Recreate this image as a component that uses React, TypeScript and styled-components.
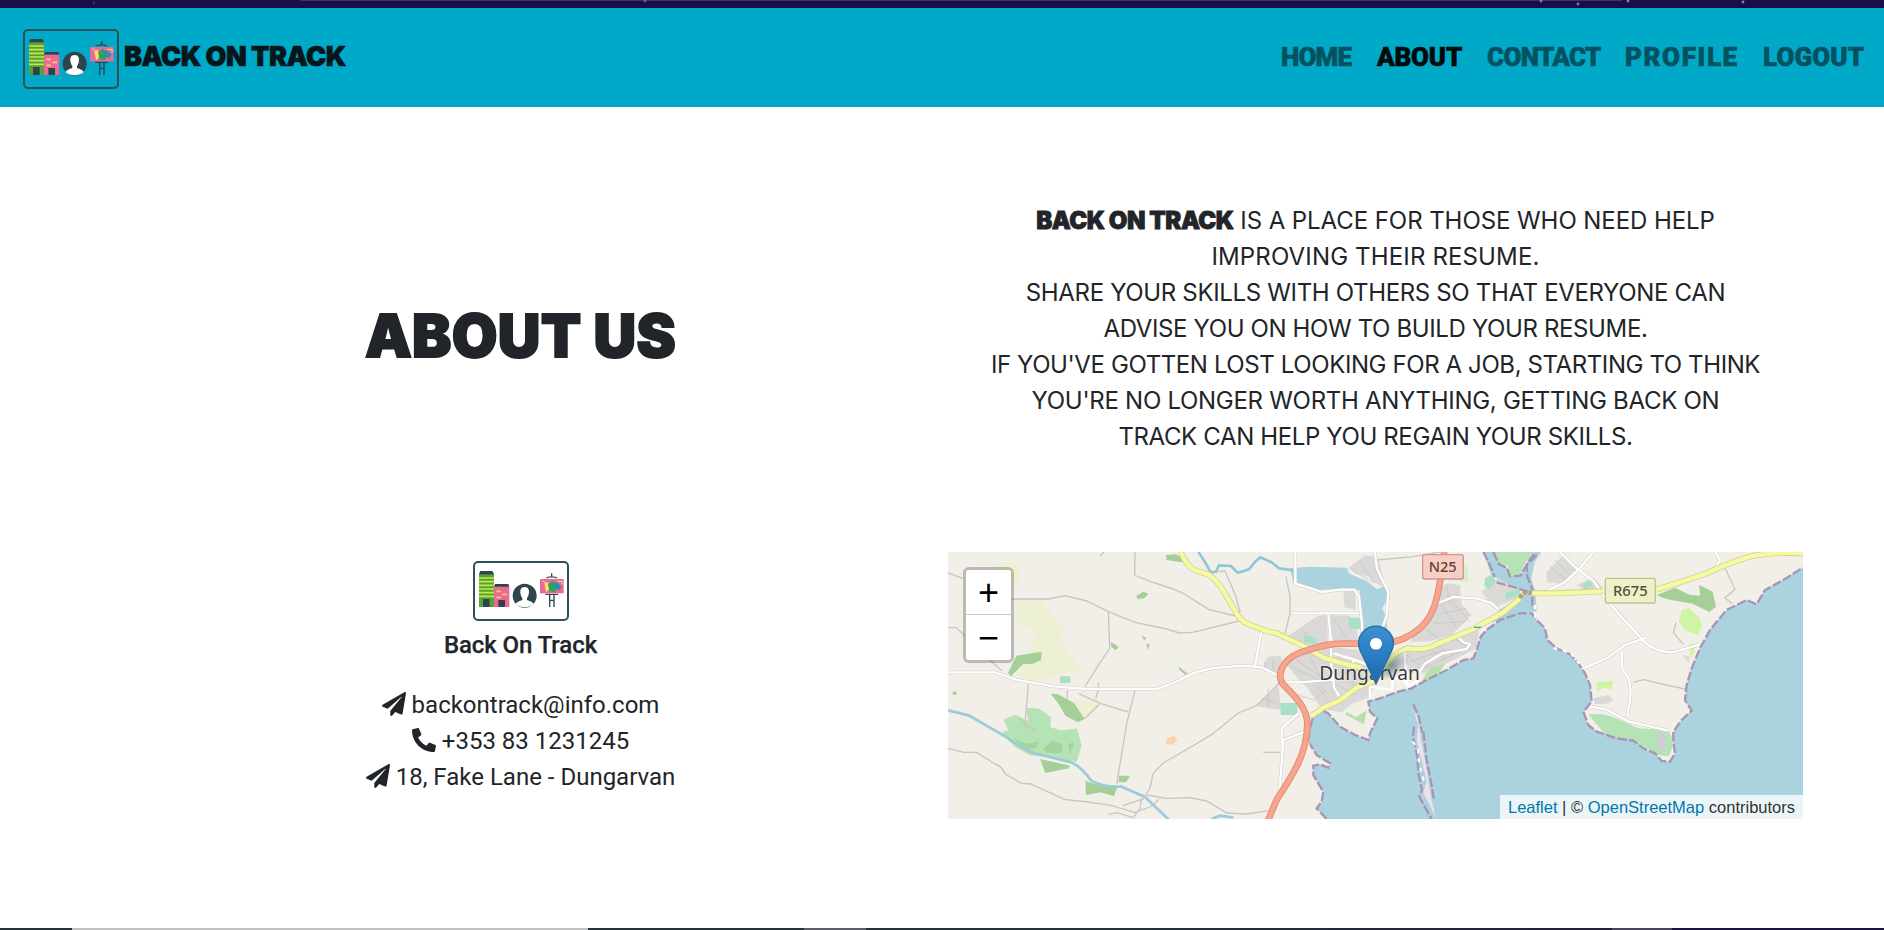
import React from "react";
import styled, { createGlobalStyle } from "styled-components";
import { FaPaperPlane, FaPhoneAlt } from "react-icons/fa";

const GlobalStyle = createGlobalStyle`
  *, *::before, *::after { box-sizing: border-box; }
  body { margin: 0; background: #fff; color: #212529; font-family: Roboto, sans-serif; font-size: 24px; line-height: 36px; }
`;

const Page = styled.div`
  display: flex;
  flex-direction: column;
  height: 930px;
  overflow: hidden;
`;

const NightStrip = styled.div`
  flex: none;
  height: 8px;
  background: #190f48;
  svg { display: block; }
`;

const Navbar = styled.header`
  flex: none;
  display: flex;
  align-items: center;
  justify-content: space-between;
  height: 99px;
  padding: 0 20px 0 23px;
  background: #00a9c8;
`;

const Brand = styled.a`
  display: flex;
  align-items: center;
  gap: 5px;
  padding-top: 3px;
  color: #06161a;
`;

const BrandName = styled.span`
  padding-bottom: 4px;
  font: 900 27px/40px Inter, sans-serif;
  letter-spacing: -0.55px;
  -webkit-text-stroke: 0.6px;
`;

const Nav = styled.nav`
  display: flex;
  gap: 25px;
  padding-bottom: 1px;
`;

const NavLink = styled.a<{ $active?: boolean; $width: number; $track: number }>`
  width: ${(p) => p.$width}px;
  white-space: nowrap;
  font: 900 26px/40px Roboto, sans-serif;
  letter-spacing: ${(p) => p.$track}px;
  -webkit-text-stroke: 0.6px;
  color: ${(p) => (p.$active ? "#04090a" : "#04525f")};
`;

const Main = styled.main`
  flex: 1;
  display: grid;
  grid-template-columns: 855px 855px;
  grid-template-rows: 445px 1fr;
  padding-left: 93px;
  background: #fff;
`;

const TitleCell = styled.section`
  display: flex;
  align-items: center;
  justify-content: center;
  padding-top: 13px;
`;

const Title = styled.h1`
  margin: 0;
  font: 900 59px/72px Inter, sans-serif;
  letter-spacing: 0.3px;
  -webkit-text-stroke: 1.8px;
`;

const Story = styled.section`
  padding-top: 96px;
  text-align: center;
  font-family: Inter, sans-serif;
`;

const Line = styled.div<{ $track: number }>`
  height: 36px;
  white-space: nowrap;
  letter-spacing: ${(p) => p.$track}px;
`;

const Strong = styled.strong`
  font-weight: 900;
  letter-spacing: -0.45px;
  -webkit-text-stroke: 0.8px;
`;

const Contact = styled.section`
  display: flex;
  flex-direction: column;
  align-items: center;
  padding-top: 9px;
`;

const Company = styled.strong`
  margin: 6px 0 24px;
  font-weight: 500;
  letter-spacing: -0.08px;
  -webkit-text-stroke: 0.25px;
`;

const ContactRow = styled.div`
  display: flex;
  align-items: center;
  gap: 6px;
  height: 36px;
  svg { display: block; margin-bottom: 2px; }
`;

const MapFrame = styled.section`
  position: relative;
  width: 855px;
  height: 267px;
  overflow: hidden;
  background: #f2efe9;
  svg { display: block; }
`;

const ZoomControl = styled.div`
  position: absolute;
  left: 15px;
  top: 15px;
  border: 3px solid rgba(0, 0, 0, 0.22);
  border-radius: 6px;
  background-clip: padding-box;
`;

const ZoomButton = styled.button`
  display: flex;
  align-items: center;
  justify-content: center;
  width: 45px;
  height: 45px;
  padding: 0;
  border: 0;
  background: #fff;
  color: #000;
  font: 36px/45px "Liberation Sans", Arial, sans-serif;
  &:first-child { border-bottom: 1px solid #ccc; border-radius: 3px 3px 0 0; }
  &:last-child { border-radius: 0 0 3px 3px; }
`;

const Attribution = styled.div`
  position: absolute;
  right: 0;
  bottom: 0;
  height: 24px;
  padding: 0 8px;
  background: rgba(255, 255, 255, 0.76);
  color: #333;
  font: 16.5px/24px "Liberation Sans", Arial, sans-serif;
  a { color: #0078a8; }
`;

const BottomStrip = styled.footer`
  flex: none;
  height: 2px;
  background: linear-gradient(90deg, #263238 0 72px, #c2c2c2 72px 588px, #263238 588px 804px, #5c5f6a 804px 866px, #263238 866px 1100px, #221f3a 1612px, #46445c 1612px 1672px, #1b1340 1672px);
`;

function Logo() {
  return (
    <svg width="96" height="60" viewBox="0 0 288 180">
      <rect x="3" y="3" width="282" height="174" rx="12" fill="none" stroke="#2f5058" strokeWidth="6" />
      <path d="M22 30h36l5 9v8H18v-8z" fill="#2d454b" />
      <path d="M18 40h45v98H18z" fill="#58a03a" />
      <path d="M18 51h45M18 62h45M18 73h45M18 84h45M18 95h45M18 106h45" stroke="#c5e84a" strokeWidth="5" />
      <path d="M30 114h20v24H30z" fill="#2d454b" />
      <path d="M66 69h40l3 9H63z" fill="#2d454b" />
      <path d="M63 77h46v61H63z" fill="#e96a97" />
      <path d="M70 91h14M88 100h15M70 109h14" stroke="#ffc76b" strokeWidth="5" />
      <path d="M76 117h20v21H76z" fill="#2d454b" />
      <circle cx="155" cy="104" r="36" fill="#2d454b" />
      <path d="M155 78c-12 0-15 10-12 22 1 7 4 9 5 12v5c-9 4-18 5-20 13 15 12 39 12 54 0-2-8-11-9-20-13v-5c1-3 4-5 5-12 3-12 0-22-12-22z" fill="#fff" />
      <path d="M236 37v10M221 52c2-6 28-6 30 0M230 100v38M243 100v38M230 118h13M217 100h38" fill="none" stroke="#2d454b" strokeWidth="4" />
      <path d="M201 54h71v43h-71z" fill="#e96a97" />
      <path d="M214 66l12-3 4 22-11 9z" fill="#f9df62" />
      <path d="M225 68l16-8 14 16-10 18-16-4z" fill="#30a35b" />
      <path d="M240 62l16 5 10 10-8 10-8-3-8-10z" fill="#2b93a8" />
      <path d="M208 60l9 4M253 61h14v9" stroke="#ffd2a0" strokeWidth="3" fill="none" />
    </svg>
  );
}

const coast = { stroke: "#a995b3", strokeWidth: 7, strokeDasharray: "28 7", fill: "none" };

function DungarvanMap() {
  return (
    <svg width="855" height="267" viewBox="24 21 2565 801" preserveAspectRatio="none">
      <rect x="24" y="21" width="2565" height="801" fill="#f2efe9" />

      {/* farmland and scrub */}
      <g fill="#edf0d2">
        <path d="M165 55l60-5 12 20v45l-60-10zM222 168l90 0 32 60 30 20-10 35 35 60 35 32-60 8-75 30-70-20 40-60 15-75-50-15z" />
        <path d="M400 460l40 10 25-10 18 18-48 48-25-30z" />
      </g>
      <g fill="#b5e3b5">
        <path d="M258 488l40 3 35 25-2 30 30 10 50-5 14 50-15 50-60-10-80-10-45-25-40-45 20-5-15-32 35-15 40 20z" />
        <path d="M1945 508q45-6 90 15l60 27 90 5 10 22q10 20-8 57l-40-5-25-20-50-17-70-15z" />
        <path d="M1660 21h122l-28 35-15 38-32-4-3-28-29-8z" />
      </g>
      <g fill="#a5cf97">
        <path d="M678 30l30-2 28 16-12 8-45-7zM590 152l20-12 15 6-12 14-22 2zM204 384l25-52 76-12-2 26-24 10-30 2-36 36zM332 446l22 2 48 26 32 48-20 10-38-20-20-35zM436 708l40 12 56 6-10 28-40-12-44 8zM300 642l90 20-4 8-70 14zM536 692h34l-12 20h-22zM512 290l24 16-8 10-14-10zM604 270l16 10-8 6zM618 300l10-6-2 20zM716 365l28 22-8 3-20-18zM38 440h12v9H38z" />
        <path d="M2150 150l55-22 45 22 30 2-2-32 40 20 10 45-20 16-50-25-60-10-30-8z" />
        <path d="M220 580l40 16 38-7-12 22-32-2zM308 612l30-25 30 12-3 26-45-2zM386 600l12-10 2 15-12 22z" opacity=".85" />
      </g>
      <path d="M2225 195l22-5 32 30 6 25-10 26-40-15-18-25zM1970 412l50-5-5 26-25-4-20 8zM2245 300l18-8v30l-10 18z" fill="#cdf5a4" />
      <path d="M1555 60h26l5 55-40-10z" fill="#d5f2cf" />
      <path d="M680 580l22-8 10 12-14 16-20-2z" fill="#fbd3a8" />

      {/* built-up areas */}
      <g fill="#dbd9d7">
        <path d="M984 335l40-2 5 60-62-25zM1015 420l10 75-65-10-12-5zM1040 360l60-40 60-15 130 12 20 80-20 60-55 20-30 25-60-10-40-60-30-30z" />
        <path d="M1040 275l90-60 30-10 4 90-70 20zM1170 210l60 2 25 55-5 28-70-2zM1210 140l36-5v60l-32-8z" />
        <path d="M1225 70l50-40 40 8 20 90-30-15-18-18-40-10z" />
        <path d="M1500 125l25-10 35 5 5 60 30 30-60 60-70 20-55 0 40-55 35-40z" />
        <path d="M1395 315l75-10 75-35 75-35-10 75-80 40-75 35-70-8z" />
        <path d="M1625 140l60-50 60 40-15 30-70 30zM1820 80l45-45 50 40-45 42-50-5zM1910 120l50-22 30 32-50 10z" />
        <path d="M1960 460l45-10 15 15-20 12h-35zM2228 330l22 5-5 18z" />
      </g>
      <g stroke="#c3c0bf" strokeWidth="2" fill="none">
        <path d="M1050 365l90 40M1070 345l80 55M1110 335l40 80M975 350v30M1000 345v34M965 460l48 15M985 430v55M1060 445l60 20 40-30M1130 420l45 60M1150 395l95 55M1180 340l100 35M1190 325l40 90M1240 330v100" />
        <path d="M1400 330l50 40M1430 320l40 40M1460 305l60 40M1490 300l50 30M1530 275l60 35M1410 350l100-35M1440 375l130-60M1500 170l50 80M1520 150l70 80M1490 210l90-20M1480 235l100-5M1520 120l10 60M1235 75l70 40M1260 50l40 60M1830 65l50 40M1845 45l50 50M1440 240l80 60M1180 220l40 60M1060 280l60 30M1085 255l50 45" />
      </g>
      <g fill="#aadfc8">
        <path d="M1226 218h36v34h-36zM360 394h31v20h-31zM1022 474h50v36h-50zM1092 270l38 8-6 20-34-8zM1635 100l22-12 10 22-20 24-14-12zM1695 145l40-15 8 18-44 16zM1925 118l26-12 6 20-22 8z" />
        <path d="M1218 500l30 16 32-20-8 42-54-28zM1455 390l20-25 40-8-25 38-45 15z" fill="#b8e0a8" />
      </g>

      {/* sea, harbour and estuary */}
      <g fill="#aad3df">
        <path d="M1160 822l-30-32 15-20 5-30-30-50v-28l20-4 25 10 5-13-40-25-25-40 3-30 10-40 27-25 20 10 35 40 45 25 40 15 5-20 22-45-22-20-5-30 35-10 55-20 40-10 45-25 60-30 50-30 30-5 12-30 10-35 18-20 40-30 60-20h35l15 20 25 25 7 35 28 25 40 18 25 27 20 30 15 35 5 50-25 30 15 40 25 20 60 20 50 7 30 23 35 15 20 23 25 2 15-25-5-35v-30l25-35 30-28-20-32 5-45 15-50 25-60 30-55 50-60 60-30 30 13 25-43 55-30 59-37v764z" />
        <path d="M1050 70l60-5 110 3 8 18 52 22 30 24 28-8 5 38-16 28 12 30 2 30-20 60-46 20-6-70-10-124-60-3-75 2-64-22z" />
        <path d="M1630 21h32l16 38 22 8 8 27 32-2 22-40 22-31h20l-20 30-10 50 12 38 4 60-60 10-80 25 30-42 60-28 12-24-50-25-48-24z" />
      </g>
      <path d="M775 21l20 30 18 32 16-4 8-18 36 2 20 20 34-10 18-22 16-14 34 15 22 18 42 6" fill="none" stroke="#90c7d8" strokeWidth="8" />
      <path d="M24 496l62 15 108 62q60 45 100 54l100 25q32 15 60 55 35 20 90 18l70 30 80 76M815 822l25-10 40 6" fill="none" stroke="#9acbd9" strokeWidth="8" />
      <path d="M1422 500l12 15 8 45 0 20 20 105 12 80 14 54-38-75 10-35-12-50-18-75 5-45z" fill="#f0e1e5" />

      {/* shoreline */}
      <g {...coast}>
        <path d="M1160 822l-30-32 15-20 5-30-30-50v-28l20-4 25 10 5-13-40-25-25-40 3-30 10-40 27-25 20 10 35 40 45 25 40 15 5-20 22-45-22-20-5-30 35-10 55-20 40-10 45-25 60-30 50-30 30-5 12-30 10-35 18-20 40-30 60-20h35l15 20 25 25 7 35 28 25 40 18 25 27 20 30 15 35 5 50-25 30 15 40 25 20 60 20 50 7 30 23 35 15 20 23 25 2 15-25-5-35v-30l25-35 30-28-20-32 5-45 15-50 25-60 30-55 50-60 60-30 30 13 25-43 55-30 59-37" />
        <path d="M1630 21l18 35 16 40M1670 112l55 15 45 16M1660 21l18 38 22 8 10 27 32-2 22-40 22-31M1790 30l-30 30 2 35 16 40-2 55M1420 478l16 36 10 50M1422 545l-3 30 12 55 5 60 10 45-8 20 30 55 18 33M1450 560l10 85 12 60 10 60" />
      </g>
      <path d="M1785 180v50M1840 310l50 12 38 48M1418 590l16 20 4 50 16 55M1105 590v18" stroke="#fff" strokeWidth="6" strokeDasharray="12 16" fill="none" />
      <path d="M2155 565l22 5-4 50-22-20z" fill="#d5cbd6" />

      {/* lanes and minor roads */}
      <g fill="none" stroke="#c9c5c2" strokeWidth="4">
        <path d="M24 84l45 16M215 162h110l50-10 65 16 65 32 80 32 95 20 38 12 40-2 90-22 56-14M585 21l-1 70 52 20 55 18 35 14 80 50 80 20M505 200l4 110-40 60-34 54M24 248h25l26 24M150 345l35 32M265 418l-10 115 10 10M240 518l15 25 30 10-10 10M382 436v25M415 445l65 30 85 26M585 436l-25 100-30 180M478 478l-45 44M475 412v24l-8 24M1020 412l-70 70-55 22-80 65-50 30-95 55-30 30-10 45-20 33-62 20M24 610l46 12h40l55 35q20 5 30 30l50 28 28 2 100 46 70 8 70 10 72 22 50-20 22-20M605 760l-5 30-20 28-50-15-25 5M620 750l60 10 70-2 50 10 60 36 60 3 65-10M835 80l20-2 30 70 15 50-10 25M1038 95l12 60v50l-15 60M480 33l12-12M970 622h50M1310 45l110-10 80-14" />
        <path d="M2350 58l35 75-30 26 22 18M2208 233l-8 30 30 35M2080 412l30-8 60 14 65 14" />
      </g>
      <g fill="none" stroke="#cfcccb" strokeWidth="10">
        <path d="M24 382h142l62 22 112 20 100 8h210l50-18 65-32 50-12 90-8 60 5 60 30M945 364l18-100M1066 21v95l80 25 55-7h42l14 20 9 80 2 100M1055 205h200M1165 210l8 80v60l10 80 15 24M1022 412h60l100-8M1025 600v-50l50-44M1095 560l-65 25-12 160" />
        <path d="M1305 21l6 50 34 70-5 70-15 45 15 60M1480 180l60-24 70 4 44 14 22 20M1550 272l20 20 20 6-10 14-75 14-50 30-20 30M1860 21l45 45 56 42 34 50 67 78 62 65q45 28 85 18l70-20M1960 21l-42 50-45 42-60 28M2326 21l14 25-10 16M2120 278l-65 22-55 40-65 28M2045 318v50l20 30q10 30 5 65l-8 50M1950 484l50 10 65 35 120 28" />
      </g>
      <g fill="none" stroke="#fff" strokeWidth="7">
        <path d="M24 382h142l62 22 112 20 100 8h210l50-18 65-32 50-12 90-8 60 5 60 30M945 364l18-100M1066 21v95l80 25 55-7h42l14 20 9 80 2 100M1055 205h200M1165 210l8 80v60l10 80 15 24M1022 412h60l100-8M1025 600v-50l50-44M1095 560l-65 25-12 160" />
        <path d="M1305 21l6 50 34 70-5 70-15 45 15 60M1480 180l60-24 70 4 44 14 22 20M1550 272l20 20 20 6-10 14-75 14-50 30-20 30M1860 21l45 45 56 42 34 50 67 78 62 65q45 28 85 18l70-20M1960 21l-42 50-45 42-60 28M2326 21l14 25-10 16M2120 278l-65 22-55 40-65 28M2045 318v50l20 30q10 30 5 65l-8 50M1950 484l50 10 65 35 120 28" />
        <path d="M1180 325l60 18 80 30M1240 343v30M1395 310v45l10 70M1290 425l65 10 5-40 20 10M1380 390l25 35 30-20M1290 425v35" />
      </g>

      {/* secondary roads */}
      <g fill="none" strokeLinejoin="round">
        <g stroke="#d3d192" strokeWidth="18">
          <path d="M722 21q20 45 43 55l40 12q28 20 45 50l30 50q20 40 45 50 55 22 85 27l80 38 60 35 60 18 55 12M1115 512l35-24 50-22 50-38 50-20 40-50 30-33 38-18M1405 310q50 8 80-10l115-48 90-50 50-42" />
          <path d="M1776 145h72l140-6M2150 133l60-18 90-30q75-35 130-50 60-15 159-10" />
        </g>
        <g stroke="#f6f9a3" strokeWidth="13">
          <path d="M722 21q20 45 43 55l40 12q28 20 45 50l30 50q20 40 45 50 55 22 85 27l80 38 60 35 60 18 55 12M1115 512l35-24 50-22 50-38 50-20 40-50 30-33 38-18M1405 310q50 8 80-10l115-48 90-50 50-42" />
          <path d="M1776 145h72l140-6M2150 133l60-18 90-30q75-35 130-50 60-15 159-10" />
        </g>
        <path d="M1738 158l15-15h22" stroke="#b9a06b" strokeWidth="13" strokeDasharray="12 5" />
        <path d="M985 824l25-60q40-60 62-104 30-60 30-125 0-30-25-65-15-20-42-46-26-25-6-60 20-36 80-50 50-18 100-18h120q60-4 110-45 40-35 53-100l20-100v-32" stroke="#e28c76" strokeWidth="20" />
        <path d="M985 824l25-60q40-60 62-104 30-60 30-125 0-30-25-65-15-20-42-46-26-25-6-60 20-36 80-50 50-18 100-18h120q60-4 110-45 40-35 53-100l20-100v-32" stroke="#f8a58e" strokeWidth="14" />
      </g>
      <path d="M1602 247h22" stroke="#4a96d0" strokeWidth="4" />

      {/* road shields and town label */}
      <rect x="1448" y="29" width="122" height="73" rx="6" fill="#f6cfc6" stroke="#d3968a" strokeWidth="4" />
      <rect x="1996" y="100" width="150" height="74" rx="6" fill="#eef0c9" stroke="#c0c28c" strokeWidth="4" />
      <g fontFamily="Noto Sans, sans-serif" textAnchor="middle">
        <text x="1508" y="80" fontSize="44" fontWeight="500" fill="#6f3a33" textLength="84" lengthAdjust="spacingAndGlyphs">N25</text>
        <text x="2071" y="153" fontSize="44" fontWeight="500" fill="#4e5230" textLength="104" lengthAdjust="spacingAndGlyphs">R675</text>
        <text x="1289" y="405" fontSize="57" fill="#3a3a3a" stroke="#fff" strokeOpacity=".55" strokeWidth="5" paintOrder="stroke" textLength="302" lengthAdjust="spacingAndGlyphs">Dungarvan</text>
      </g>

      {/* location marker */}
      <defs>
        <linearGradient id="pin" x1="0" y1="0" x2="0" y2="1">
          <stop offset="0" stopColor="#3a92d2" />
          <stop offset="1" stopColor="#1b68b0" />
        </linearGradient>
        <radialGradient id="pinShadow">
          <stop offset="0" stopColor="#2d4f5a" stopOpacity=".6" />
          <stop offset="1" stopColor="#2d4f5a" stopOpacity="0" />
        </radialGradient>
      </defs>
      <ellipse cx="1356" cy="362" rx="62" ry="34" transform="rotate(-38 1356 362)" fill="url(#pinShadow)" />
      <g transform="translate(1253 241) scale(4.4 4.32)">
        <path d="M12.5.6C5.9.6.6 5.9.6 12.5c0 2.3.7 4.3 1.8 6.4L12.5 40.6l10.1-21.7c1.1-2.1 1.8-4.1 1.8-6.4C24.4 5.9 19.1.6 12.5.6z" fill="url(#pin)" stroke="#2b6f9f" strokeWidth="1" />
        <circle cx="12.5" cy="12.8" r="4.4" fill="#fff" stroke="#2a74ad" strokeWidth=".6" />
      </g>
    </svg>
  );
}

const links = [
  { label: "HOME", width: 71, track: -0.8 },
  { label: "ABOUT", width: 85, track: -0.2, active: true },
  { label: "CONTACT", width: 113, track: -0.65 },
  { label: "PROFILE", width: 113, track: 1.6 },
  { label: "LOGOUT", width: 101, track: 0.1 },
];

const story = [
  { text: "IMPROVING THEIR RESUME.", track: 0.15 },
  { text: "SHARE YOUR SKILLS WITH OTHERS SO THAT EVERYONE CAN", track: -0.34 },
  { text: "ADVISE YOU ON HOW TO BUILD YOUR RESUME.", track: -0.37 },
  { text: "IF YOU'VE GOTTEN LOST LOOKING FOR A JOB, STARTING TO THINK", track: -0.4 },
  { text: "YOU'RE NO LONGER WORTH ANYTHING, GETTING BACK ON", track: -0.29 },
  { text: "TRACK CAN HELP YOU REGAIN YOUR SKILLS.", track: -0.37 },
];

const stars = [
  [94, 3, 0.3],
  [645, 1, 0.6],
  [1541, 1, 0.9],
  [1578, 4, 0.9],
  [1628, 1, 0.9],
  [1743, 2, 0.9],
];

export default function App() {
  return (
    <Page>
      <GlobalStyle />
      <NightStrip>
        <svg width="1884" height="8">
          <path d="M300 .5h1322" stroke="#3a3262" />
          {stars.map(([x, y, glow]) => (
            <circle key={x} cx={x} cy={y} r="1.4" fill="#8f8ab8" opacity={glow} />
          ))}
        </svg>
      </NightStrip>
      <Navbar>
        <Brand>
          <Logo />
          <BrandName>BACK ON TRACK</BrandName>
        </Brand>
        <Nav>
          {links.map((l) => (
            <NavLink key={l.label} $active={l.active} $width={l.width} $track={l.track}>
              {l.label}
            </NavLink>
          ))}
        </Nav>
      </Navbar>
      <Main>
        <TitleCell>
          <Title>ABOUT US</Title>
        </TitleCell>
        <Story>
          <Line $track={-0.07}>
            <Strong>BACK ON TRACK</Strong> IS A PLACE FOR THOSE WHO NEED HELP
          </Line>
          {story.map((s) => (
            <Line key={s.text} $track={s.track}>{s.text}</Line>
          ))}
        </Story>
        <Contact>
          <Logo />
          <Company>Back On Track</Company>
          <ContactRow><FaPaperPlane />backontrack@info.com</ContactRow>
          <ContactRow><FaPhoneAlt />+353 83 1231245</ContactRow>
          <ContactRow><FaPaperPlane />18, Fake Lane - Dungarvan</ContactRow>
        </Contact>
        <MapFrame>
          <DungarvanMap />
          <ZoomControl>
            <ZoomButton>+</ZoomButton>
            <ZoomButton>−</ZoomButton>
          </ZoomControl>
          <Attribution>
            <a>Leaflet</a> | © <a>OpenStreetMap</a> contributors
          </Attribution>
        </MapFrame>
      </Main>
      <BottomStrip />
    </Page>
  );
}
